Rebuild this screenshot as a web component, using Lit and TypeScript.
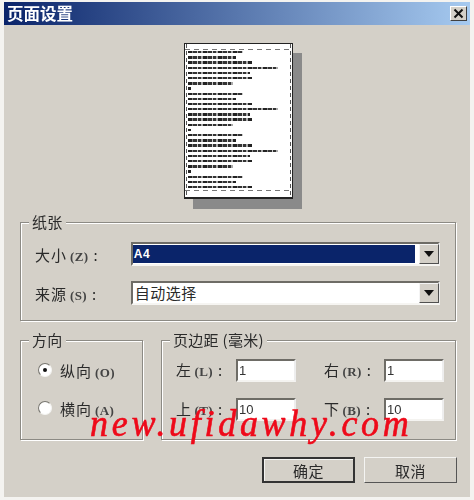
import { LitElement, html, css } from "lit";
import { customElement } from "lit/decorators.js";

const block = [55, 48, 64, 90, 62, 64, 45, 3];
const lines: number[] = [];
for (let i = 0; i < 3; i++) lines.push(...block);
lines.push(...block.slice(0, 3));

@customElement("app-root")
export class AppRoot extends LitElement {
  static styles = css`
    :host { display: block; width: 474px; height: 500px; background: #f4f3f0; overflow: hidden; position: relative;
      font-family: "Noto Sans CJK SC", "Liberation Sans", sans-serif; color: #2a2a2a; }
    .win { box-sizing: border-box; position: relative; margin: 2px 0 0 4px; width: 466px; height: 495px; background: #d4d0c8; filter: blur(0.45px); }
    .title { height: 23px; box-sizing: border-box; background: linear-gradient(90deg, #0a246a, #a6caf0); display: flex; align-items: center; justify-content: space-between; padding: 0 3px; }
    .title span { color: #fff; font-size: 16.5px; font-weight: 700; line-height: 23px; }
    .x { width: 17px; height: 15px; background: #d4d0c8; box-sizing: border-box; border: 1px solid; border-color: #fff #404040 #404040 #fff; display: flex; align-items: center; justify-content: center; }
    .preview { display: flex; justify-content: center; padding: 18px 0 0 3px; box-sizing: border-box; height: 197px; }
    .page { box-sizing: border-box; width: 109px; height: 156px; background: #fff; border: 1px solid #222; border-width: 1px 1px 2px 1px; box-shadow: 9px 10px 0 #8a8a8a; position: relative; padding: 7px 0 0 3px; overflow: hidden; }
    .dash { position: absolute; left: 0; right: 0; height: 1px; background: repeating-linear-gradient(90deg, #777 0 5px, transparent 5px 9px); }
    .vdash { position: absolute; top: 0; bottom: 0; right: 1px; width: 1px; background: repeating-linear-gradient(180deg, #555 0 4px, transparent 4px 7px); }
    .ldash { position: absolute; top: 0; bottom: 0; left: 1px; width: 1px; background: repeating-linear-gradient(180deg, #555 0 4px, transparent 4px 7px); }
    .ln { height: 2.4px; margin: 0 0 2.8px 0; background: repeating-linear-gradient(90deg, #222 0 4px, #888 4px 5px, #333 5px 9px, #ccc 9px 10px, #333 10px 13px, #aaa 13px 15px); }
    .grp { box-sizing: border-box; border: 1px solid #8c8a84; box-shadow: 1px 1px 0 #fff, inset 1px 1px 0 #fff; position: relative; }
    .lg { position: absolute; top: -11px; left: 8px; background: #d4d0c8; padding: 0 3px; font-size: 15px; line-height: 20px; white-space: nowrap; letter-spacing: .3px; }
    .paper { margin-left: 16px; width: 436px; height: 99px; padding: 19px 15px 0 14px; display: flex; flex-direction: column; gap: 15px; }
    .row { display: flex; align-items: center; height: 24px; }
    .lab { width: 96px; font-size: 15px; letter-spacing: 1px; white-space: nowrap; }
    small { font-family: "Liberation Serif", serif; font-size: 13px; font-weight: 700; color: #444; letter-spacing: .4px; margin: 0 5px 0 3px; }
    .combo { width: 310px; height: 24px; box-sizing: border-box; background: #fff; border: 2px solid; border-color: #6e6c66 #eee #f6f5f2 #6e6c66; display: flex; align-items: stretch; position: relative; }
    .val { flex: 1; font-size: 15px; line-height: 20px; padding-left: 2px; letter-spacing: .5px; }
    .val.sel { background: #0a246a; color: #fff; font-family: "Liberation Sans", sans-serif; font-weight: 700; font-size: 12px; margin: 1px 4px 1px 0; line-height: 18px; padding-left: 1px; }
    .btn { width: 20px; margin-right: -1px; background: #d4d0c8; box-sizing: border-box; border: 1px solid; border-color: #f4f4f4 #505050 #505050 #f4f4f4; display: flex; align-items: center; justify-content: center; }
    .lower { display: flex; gap: 18px; margin: 19px 0 0 16px; }
    .dir { width: 123px; height: 100px; padding: 19px 0 0 17px; display: flex; flex-direction: column; gap: 18px; }
    .radio { display: flex; align-items: center; gap: 8px; height: 20px; font-size: 15px; letter-spacing: 1px; white-space: nowrap; }
    .dot { width: 14px; height: 14px; border-radius: 50%; background: #fff; box-sizing: border-box; border: 1.5px solid; border-color: #77756f #f4f4f2 #f4f4f2 #77756f; display: flex; align-items: center; justify-content: center; }
    .dot i { width: 4px; height: 4px; background: #111; border-radius: 50%; }
    .margin { width: 295px; height: 100px; padding: 18px 10px 0 14px; display: grid; grid-template-columns: 60px 60px 28px 60px 60px; grid-template-rows: 23px 23px; row-gap: 16px; }
    .mlab { font-size: 15px; line-height: 22px; white-space: nowrap; letter-spacing: .5px; }
    .ipt { width: 60px; height: 23px; box-sizing: border-box; background: #fff; border: 2px solid; border-color: #6e6c66 #eee #f4f3f0 #6e6c66; font-family: "Liberation Sans", sans-serif; font-size: 13px; line-height: 19px; padding-left: 1px; color: #333; }
    .actions { display: flex; justify-content: flex-end; gap: 9px; margin: 17px 13px 0 0; }
    .b { width: 93px; height: 26px; box-sizing: border-box; background: #d4d0c8; font-size: 15px; letter-spacing: .5px; display: flex; align-items: center; justify-content: center; border: 1px solid; border-color: #f4f4f2 #555 #555 #f4f4f2; }
    .b.def { border: 2px solid #333; box-shadow: inset 1px 1px 0 #f4f4f2; }
    .wm { position: absolute; left: 90px; top: 406px; color: #ee0a1a; font-family: "Liberation Serif", serif; font-style: italic; font-size: 36px; line-height: 36px; letter-spacing: 3.7px; white-space: nowrap; transform: scaleY(1.08); transform-origin: 0 75%; -webkit-text-stroke: .6px #ee0a1a; pointer-events: none; }
  `;

  render() {
    const arrow = html`<svg width="10" height="6" viewBox="0 0 10 6"><path d="M0 0H10L5 6Z" fill="#111"/></svg>`;
    return html`
      <div class="win">
        <div class="title">
          <span>页面设置</span>
          <div class="x"><svg width="11" height="11" viewBox="0 0 11 11"><path d="M1.5 1.5 9.5 9.5M9.5 1.5 1.5 9.5" stroke="#111" stroke-width="2"/></svg></div>
        </div>
        <div class="preview">
          <div class="page">
            <div class="dash" style="top:5px"></div><div class="dash" style="bottom:6px"></div>
            <div class="vdash"></div><div class="ldash"></div>
            ${lines.map((w) => html`<div class="ln" style="width:${w}px"></div>`)}
          </div>
        </div>
        <div class="grp paper">
          <div class="lg">纸张</div>
          <div class="row"><div class="lab">大小<small>(Z)</small>:</div>
            <div class="combo"><div class="val sel">A4</div><div class="btn">${arrow}</div></div></div>
          <div class="row"><div class="lab">来源<small>(S)</small>:</div>
            <div class="combo"><div class="val">自动选择</div><div class="btn">${arrow}</div></div></div>
        </div>
        <div class="lower">
          <div class="grp dir">
            <div class="lg">方向</div>
            <div class="radio"><span class="dot"><i></i></span><span>纵向<small>(O)</small></span></div>
            <div class="radio"><span class="dot"></span><span>横向<small>(A)</small></span></div>
          </div>
          <div class="grp margin">
            <div class="lg">页边距 (毫米)</div>
            <div class="mlab">左<small>(L)</small>:</div><div class="ipt">1</div><div></div><div class="mlab">右<small>(R)</small>:</div><div class="ipt">1</div>
            <div class="mlab">上<small>(T)</small>:</div><div class="ipt">10</div><div></div><div class="mlab">下<small>(B)</small>:</div><div class="ipt">10</div>
          </div>
        </div>
        <div class="actions"><div class="b def">确定</div><div class="b">取消</div></div>
      </div>
      <div class="wm">new.ufidawhy.com</div>
    `;
  }
}
